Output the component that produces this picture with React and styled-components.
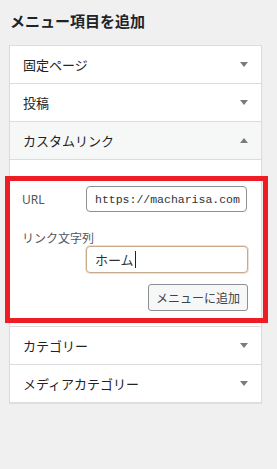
import React from 'react';
import styled, { createGlobalStyle } from 'styled-components';

const GlobalStyle = createGlobalStyle`
    html, body {
        margin: 0;
        padding: 0;
        background: #f0f0f1;
        font-family: "Noto Sans CJK JP", "Noto Sans", sans-serif;
        color: #1d2327;
    }
`;

const Page = styled.div`
    width: 277px;
    min-height: 469px;
    padding: 11px 0 0 9px;
    box-sizing: border-box;
`;

const Heading = styled.h2`
    margin: 0 0 14px 1px;
    font-size: 15px;
    line-height: 20px;
    font-weight: 700;
    color: #1d2327;
    letter-spacing: 0;
`;

const Panel = styled.div`
    width: 253px;
    box-sizing: border-box;
    background: #fff;
    border: 1px solid #dcdcde;
    box-shadow: 0 1px 1px rgba(0, 0, 0, 0.06);
`;

const SectionHeader = styled.div`
    height: 37px;
    display: flex;
    align-items: center;
    justify-content: space-between;
    padding: 0 13px 0 13px;
    border-bottom: 1px solid #dcdcde;
    background: ${({ $open }) => ($open ? '#f6f7f7' : '#fff')};
    font-size: 13px;
    color: #1d2327;
    &:last-child {
        border-bottom: none;
    }
`;

const Arrow = styled.span`
    width: 0;
    height: 0;
    border-left: 4px solid transparent;
    border-right: 4px solid transparent;
    ${({ $up }) => ($up ? 'border-bottom: 5px solid #787c82;' : 'border-top: 5px solid #787c82;')}
`;

const Content = styled.div`
    position: relative;
    padding: 26px 14px 15px 12px;
    border-bottom: 1px solid #dcdcde;
    display: flex;
    flex-direction: column;
`;

const FieldRow = styled.div`
    display: flex;
    align-items: center;
`;

const Label = styled.label`
    width: 64px;
    flex-shrink: 0;
    font-size: 12px;
    color: #50575e;
    font-family: "Noto Sans", "Noto Sans CJK JP", sans-serif;
`;

const BlockLabel = styled.label`
    margin-top: 19px;
    font-size: 12px;
    line-height: 14px;
    color: #50575e;
`;

const TextInput = styled.div`
    height: 26px;
    width: 161px;
    box-sizing: border-box;
    margin-left: ${({ $indent }) => $indent || 0}px;
    margin-top: ${({ $top }) => $top || 0}px;
    padding: 0 8px;
    border: 1px solid ${({ $focus }) => ($focus ? '#c9a98b' : '#8c8f94')};
    border-radius: 4px;
    background: #fff;
    display: flex;
    align-items: center;
    overflow: hidden;
    white-space: nowrap;
    color: #2c3338;
    font-family: ${({ $mono }) => ($mono ? '"Liberation Mono", monospace' : '"Noto Sans CJK JP", sans-serif')};
    font-size: ${({ $mono }) => ($mono ? '11.5px' : '13px')};
    ${({ $focus }) => $focus && 'height: 27px; width: 162px; box-shadow: 0 0 0 1px rgba(201, 169, 139, 0.35);'}
`;

const Caret = styled.span`
    display: inline-block;
    width: 1px;
    height: 17px;
    background: #1d2327;
    margin-left: 1px;
`;

const Actions = styled.div`
    display: flex;
    justify-content: flex-end;
    margin-top: 11px;
    padding-right: 0;
`;

const Button = styled.button`
    height: 27px;
    padding: 0 7px;
    margin-right: -1px;
    border: 1px solid #8c8f94;
    border-radius: 3px;
    background: #f6f7f7;
    color: #3c434a;
    font-family: "Noto Sans CJK JP", sans-serif;
    font-size: 12px;
    cursor: pointer;
`;

const Highlight = styled.div`
    position: absolute;
    top: 16px;
    bottom: 3px;
    left: -5px;
    right: -7px;
    border: 5px solid #ee1c25;
    pointer-events: none;
`;

const sectionsBefore = ['固定ページ', '投稿'];
const sectionsAfter = ['カテゴリー', 'メディアカテゴリー'];

export default function App() {
    return (
        <>
            <GlobalStyle />
            <Page>
                <Heading>メニュー項目を追加</Heading>
                <Panel>
                    {sectionsBefore.map((title) => (
                        <SectionHeader key={title}>
                            {title}
                            <Arrow />
                        </SectionHeader>
                    ))}
                    <SectionHeader $open>
                        カスタムリンク
                        <Arrow $up />
                    </SectionHeader>
                    <Content>
                        <FieldRow>
                            <Label>URL</Label>
                            <TextInput $mono>https://macharisa.com</TextInput>
                        </FieldRow>
                        <BlockLabel>リンク文字列</BlockLabel>
                        <TextInput $focus $indent={64} $top={1}>
                            ホーム<Caret />
                        </TextInput>
                        <Actions>
                            <Button type="button">メニューに追加</Button>
                        </Actions>
                        <Highlight />
                    </Content>
                    {sectionsAfter.map((title) => (
                        <SectionHeader key={title}>
                            {title}
                            <Arrow />
                        </SectionHeader>
                    ))}
                </Panel>
            </Page>
        </>
    );
}
